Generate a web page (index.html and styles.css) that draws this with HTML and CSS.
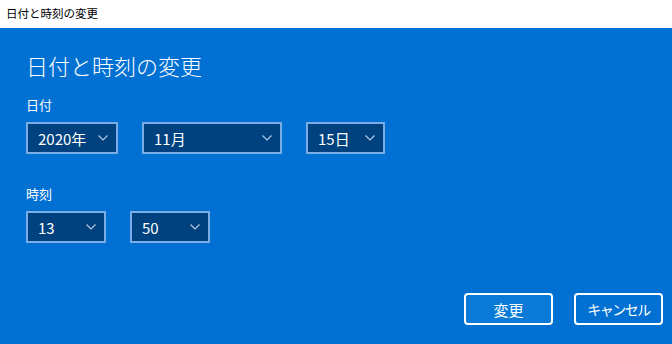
FILE: index.html
```html
<!DOCTYPE html>
<html lang="ja">
<head>
    <meta charset="UTF-8">
    <title>日付と時刻の変更</title>
    <link rel="stylesheet" href="styles.css">
</head>
<body>
    <div class="titlebar">日付と時刻の変更</div>

    <div class="dialog">
        <div class="heading">日付と時刻の変更</div>

        <div class="label">日付</div>
        <div class="row">
            <div class="select year"><span>2020年</span><svg class="chevron" viewBox="0 0 10 6"><path d="M0.5 0.5 L5 5 L9.5 0.5"/></svg></div>
            <div class="select month"><span>11月</span><svg class="chevron" viewBox="0 0 10 6"><path d="M0.5 0.5 L5 5 L9.5 0.5"/></svg></div>
            <div class="select day"><span>15日</span><svg class="chevron" viewBox="0 0 10 6"><path d="M0.5 0.5 L5 5 L9.5 0.5"/></svg></div>
        </div>

        <div class="label label-time">時刻</div>
        <div class="row">
            <div class="select hour"><span>13</span><svg class="chevron" viewBox="0 0 10 6"><path d="M0.5 0.5 L5 5 L9.5 0.5"/></svg></div>
            <div class="select minute"><span>50</span><svg class="chevron" viewBox="0 0 10 6"><path d="M0.5 0.5 L5 5 L9.5 0.5"/></svg></div>
        </div>

        <div class="actions">
            <div class="btn primary">変更</div>
            <div class="btn kana">キャンセル</div>
        </div>
    </div>
</body>
</html>
```

FILE: styles.css
```css
* {
    margin: 0;
    padding: 0;
    box-sizing: border-box;
}

body {
    font-family: 'Noto Sans CJK JP', 'Noto Sans', sans-serif;
    background: #0070d2;
    color: #ffffff;
    width: 672px;
    height: 344px;
    overflow: hidden;
}

.titlebar {
    background: #ffffff;
    color: #000000;
    height: 28px;
    line-height: 26px;
    font-size: 11.5px;
    padding-left: 6px;
}

.dialog {
    padding: 21px 9px 0 26px;
}

.heading {
    font-size: 22px;
    font-weight: 300;
    line-height: 32px;
}

.label {
    font-size: 13px;
    line-height: 20px;
    margin-top: 14px;
}

.label-time {
    margin-top: 30px;
}

.row {
    display: flex;
    gap: 24px;
    margin-top: 7px;
}

.select {
    height: 32px;
    border: 2px solid #78ade6;
    background: #00427f;
    display: flex;
    align-items: center;
    justify-content: space-between;
    padding: 0 8px 0 10px;
    font-size: 15px;
}

.select span {
    line-height: 1;
}

.year { width: 92px; }
.month { width: 140px; }
.day { width: 79px; }
.hour { width: 80px; }
.minute { width: 80px; }

.chevron {
    width: 10px;
    height: 6px;
    fill: none;
    stroke: #b8cde6;
    stroke-width: 1.1;
}

.actions {
    display: flex;
    justify-content: flex-end;
    gap: 21px;
    margin-top: 50px;
}

.btn {
    width: 89px;
    height: 32px;
    border: 2px solid #ffffff;
    border-radius: 4px;
    display: flex;
    align-items: center;
    justify-content: center;
    font-size: 15px;
}

.btn.primary {
    background: #0a7ad8;
}

.btn.kana {
    font-size: 14px;
    letter-spacing: -1.5px;
}
```
